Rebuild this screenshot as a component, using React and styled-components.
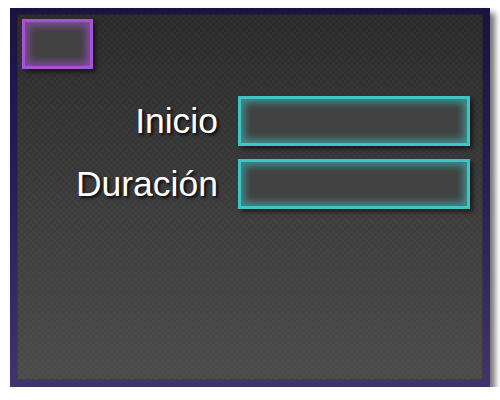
import React from "react";
import styled, { createGlobalStyle } from "styled-components";

const Global = createGlobalStyle`
  html, body { margin: 0; padding: 0; background: #ffffff; }
  body { font-family: "Liberation Sans", Arial, sans-serif; }
`;

const Frame = styled.div`
  margin: 8px 0 0 10px;
  width: 480px;
  height: 379px;
  box-sizing: border-box;
  padding: 6px 7px 7px 7px;
  background: linear-gradient(180deg, #1b1240 0%, #2a1f58 50%, #40336f 100%);
  box-shadow: 5px 5px 6px rgba(0, 0, 0, 0.55);
  display: flex;
`;

const Panel = styled.div`
  flex: 1;
  box-sizing: border-box;
  padding: 5px 13px 0 5px;
  background:
    repeating-conic-gradient(rgba(255,255,255,0.025) 0% 25%, transparent 0% 50%) 0 0 / 6px 6px,
    linear-gradient(180deg, #2a2a2a 0%, #3a3a3a 50%, #4b4b4b 100%);
  box-shadow: inset 0 0 2px rgba(0, 0, 0, 0.6);
  display: flex;
  flex-direction: column;
`;

const GlowBox = styled.div`
  box-sizing: border-box;
  width: ${(p) => p.$w}px;
  height: 50px;
  background: #424242;
  border: 3px solid ${(p) => p.$c};
  box-shadow:
    inset 0 0 7px 4px ${(p) => p.$glow},
    3px 3px 4px rgba(0, 0, 0, 0.55);
`;

const Form = styled.div`
  margin-top: 27px;
  display: grid;
  grid-template-columns: auto 232px;
  justify-content: end;
  column-gap: 20px;
  row-gap: 13px;
  align-items: center;
`;

const Label = styled.label`
  text-align: right;
  color: #ffffff;
  font-size: 35.5px;
  line-height: 40px;
  text-shadow: 2px 2px 3px rgba(0, 0, 0, 0.85);
`;

export default function App() {
  return (
    <>
      <Global />
      <Frame>
        <Panel>
          <GlowBox $w={71} $c="#a653d8" $glow="rgba(166, 83, 216, 0.6)" />
          <Form>
            <Label>Inicio</Label>
            <GlowBox $w={232} $c="#3ec6c6" $glow="rgba(62, 198, 198, 0.55)" />
            <Label>Duración</Label>
            <GlowBox $w={232} $c="#3ec6c6" $glow="rgba(62, 198, 198, 0.55)" />
          </Form>
        </Panel>
      </Frame>
    </>
  );
}
